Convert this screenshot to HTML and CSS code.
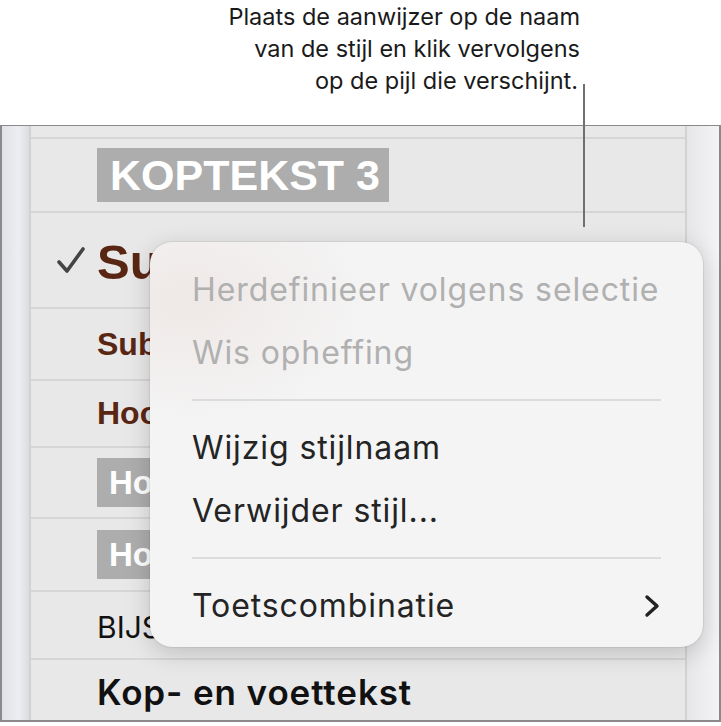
FILE: index.html
```html
<!DOCTYPE html>
<html lang="nl">
<head>
	<meta charset="UTF-8">
	<title>Stijlmenu</title>
	<link rel="stylesheet" href="styles.css">
</head>
<body>
	<div id="page">
		<div class="callout">
			<p>Plaats de aanwijzer op de naam<br>van de stijl en klik vervolgens<br><span class="last">op de pijl die verschijnt.</span></p>
		</div>
		<div class="leader"></div>

		<div class="window">
			<div class="strip left"></div>
			<div class="list">
				<div class="row top"></div>
				<div class="row koptekst"><span class="hl big">KOPTEKST 3</span></div>
				<div class="row sub1">
					<svg class="check" width="30" height="30" viewBox="0 0 30 30"><path d="M3 17 L11 26 L27 4" fill="none" stroke="#444" stroke-width="3.6" stroke-linecap="round" stroke-linejoin="round"/></svg>
					<span>Subtitel</span>
				</div>
				<div class="row sub2"><span>Subkop</span></div>
				<div class="row hoofd"><span>Hoofdstuk</span></div>
				<div class="row grey"><span class="hl">Hoofdstuk 1</span></div>
				<div class="row grey"><span class="hl">Hoofdstuk 2</span></div>
				<div class="row bij"><span>BIJSCHRIFT</span></div>
				<div class="row kop"><span>Kop- en voettekst</span></div>
			</div>
			<div class="strip right"></div>
		</div>

		<div class="menu">
			<div class="item disabled">Herdefinieer volgens selectie</div>
			<div class="item disabled">Wis opheffing</div>
			<div class="sep"></div>
			<div class="item">Wijzig stijlnaam</div>
			<div class="item">Verwijder stijl...</div>
			<div class="sep"></div>
			<div class="item sub">Toetscombinatie
				<svg width="18" height="24" viewBox="0 0 18 24"><path d="M4 3 L14 12 L4 21" fill="none" stroke="#222" stroke-width="3.4" stroke-linecap="round" stroke-linejoin="round"/></svg>
			</div>
		</div>
	</div>
</body>
</html>
```

FILE: styles.css
```css
body {
	margin: 0;
	background-color: #fff;
	font-family: Inter, Roboto, sans-serif;
}
#page {
	position: relative;
	width: 721px;
	height: 726px;
	overflow: hidden;
}
.callout {
	height: 125px;
	display: flex;
	justify-content: flex-end;
	padding-right: 141px;
	box-sizing: border-box;
}
.callout p {
	margin: 0;
	padding-top: 1px;
	text-align: right;
	font-size: 23.5px;
	line-height: 32px;
	color: #1a1a1a;
}
.callout .last {
	margin-right: 2px;
}
.leader {
	position: absolute;
	left: 583px;
	top: 84px;
	width: 2px;
	height: 143px;
	background-color: #707070;
	z-index: 2;
}
.window {
	height: 597px;
	box-sizing: border-box;
	border: 1px solid #8a8a8a;
	border-width: 1px 2px 2px 2px;
	display: grid;
	grid-template-columns: 27px 2px 654px 2px 1fr;
	background-color: #d2d2d2;
}
.strip.left {
	grid-column: 1;
	background: linear-gradient(to right, #e0e2e6, #eceef1 60%, #dcdde0);
}
.list {
	grid-column: 3;
	background-color: #e8e8e8;
	overflow: hidden;
}
.strip.right {
	grid-column: 5;
	background: linear-gradient(to right, #e6e6e8, #f4f4f6);
}
.row {
	display: flex;
	align-items: center;
	padding-left: 66px;
	border-bottom: 2px solid #d6d6d6;
	font-family: "Liberation Sans", Arial, sans-serif;
	white-space: nowrap;
	position: relative;
}
.row.top { height: 11px; }
.row.koptekst { height: 72px; }
.row.sub1 { height: 94px; }
.row.sub2 { height: 70px; }
.row.hoofd { height: 65px; }
.row.grey { height: 69px; }
.row.grey + .row.grey { height: 71px; }
.row.bij { height: 66px; }
.row.kop { height: 62px; border-bottom: none; }

.hl {
	background-color: #adadad;
	color: #fff;
	font-weight: bold;
}
.big {
	font-size: 43px;
	line-height: 54px;
	padding: 0 9px 0 13px;
}
.check {
	position: absolute;
	left: 25px;
	top: 32px;
}
.sub1 span {
	font-size: 49px;
	font-weight: bold;
	color: #5a2614;
	padding-top: 4px;
}
.sub2 span, .hoofd span {
	font-size: 32px;
	font-weight: bold;
	color: #5a2614;
}
.grey .hl {
	font-size: 33px;
	line-height: 49px;
	padding: 0 12px;
}
.bij span {
	font-family: Inter, sans-serif;
	font-size: 30px;
	color: #111;
	padding-top: 3px;
}
.kop span {
	font-family: Inter, sans-serif;
	font-size: 35px;
	font-weight: 600;
	letter-spacing: 0.9px;
	color: #111;
	padding-top: 2px;
}

.menu {
	position: absolute;
	left: 150px;
	top: 242px;
	width: 553px;
	height: 405px;
	box-sizing: border-box;
	padding: 16px 42px 0 42px;
	border-radius: 22px;
	background-color: #f4f4f4;
	background-image: radial-gradient(ellipse 180px 120px at 40px 60px, rgba(235, 225, 222, 0.6), transparent);
	box-shadow: 0 0 0 1px rgba(0, 0, 0, 0.06), 0 6px 24px rgba(0, 0, 0, 0.18);
	z-index: 3;
}
.item {
	height: 63px;
	display: flex;
	align-items: center;
	justify-content: space-between;
	font-size: 32px;
	letter-spacing: 0.9px;
	color: #242424;
	white-space: nowrap;
}
.item.disabled {
	color: #b0b0b0;
}
.sep {
	height: 2px;
	margin: 15px 0 15px 0;
	background-color: #dcdcdc;
}
```
